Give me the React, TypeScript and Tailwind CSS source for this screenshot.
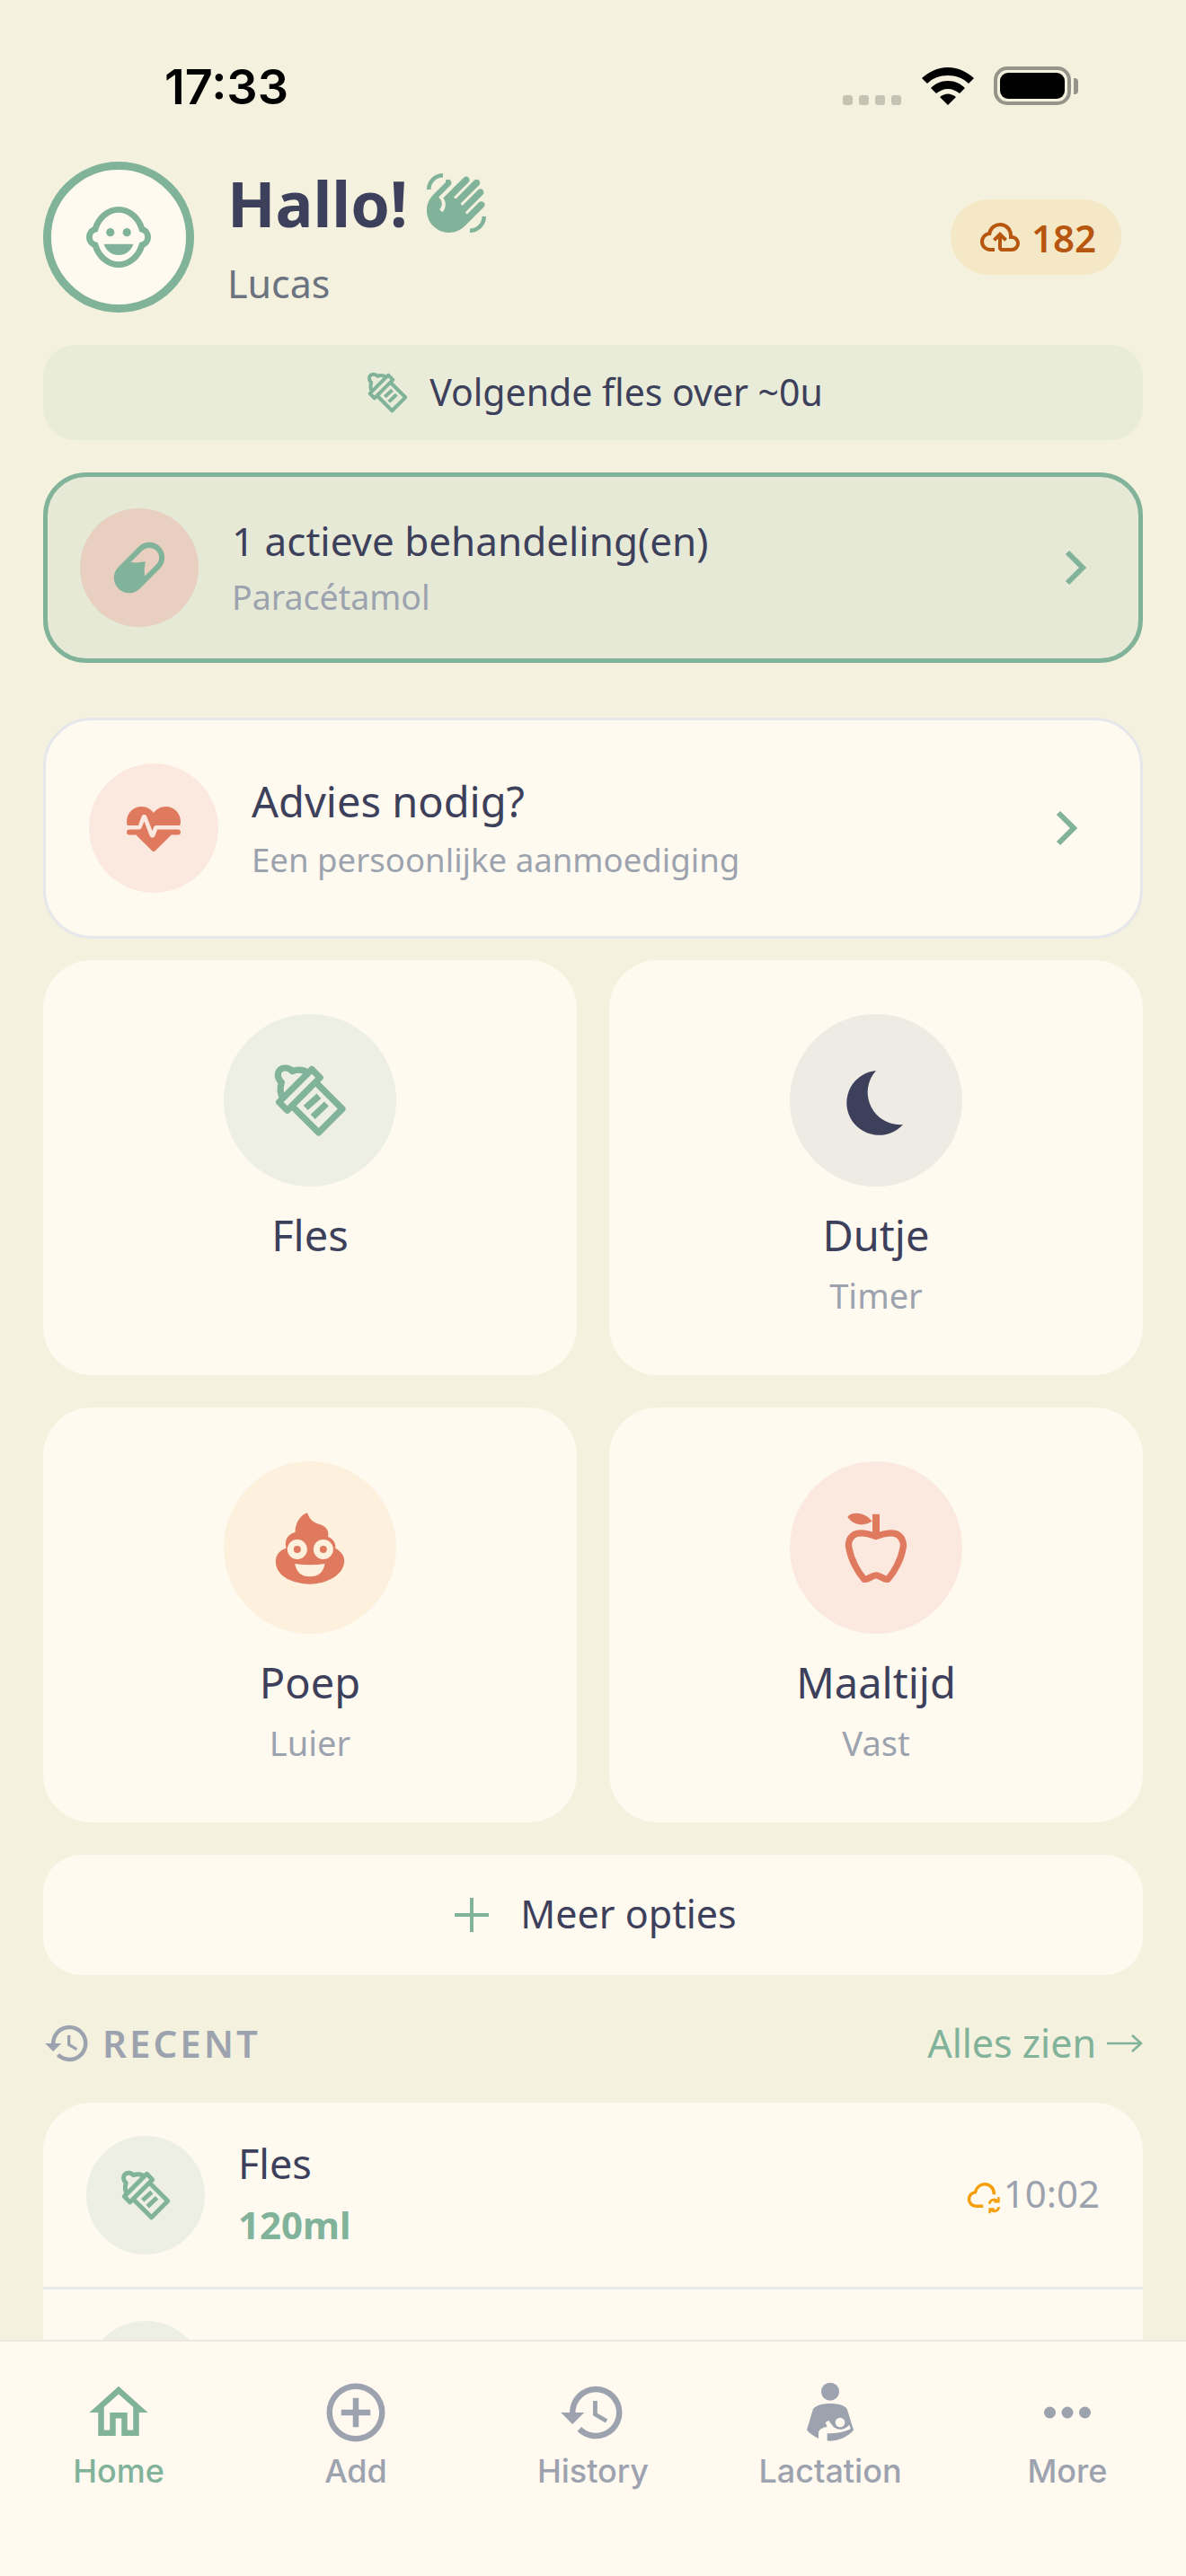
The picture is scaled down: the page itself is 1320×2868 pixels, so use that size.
import React from "react";

const Mdi = ({ d, size, className }: { d: string; size: number; className?: string }) => (
  <svg width={size} height={size} viewBox="0 0 24 24" fill="currentColor" className={className}>
    <path d={d} />
  </svg>
);

const HOME = "M12 5.69L17 10.19V18H15V12H9V18H7V10.19L12 5.69M12 3L2 12H5V20H11V14H13V20H19V12H22L12 3Z";
const PLUS_CIRCLE =
  "M12 20C7.59 20 4 16.41 4 12S7.59 4 12 4 20 7.59 20 12 16.41 20 12 20M12 2A10 10 0 0 0 2 12A10 10 0 0 0 12 22A10 10 0 0 0 22 12A10 10 0 0 0 12 2M13 7H11V11H7V13H11V17H13V13H17V11H13V7Z";
const HISTORY =
  "M13.5 8H12V13L16.28 15.54L17 14.33L13.5 12.25V8M13 3A9 9 0 0 0 4 12H1L4.96 16.03L9 12H6A7 7 0 0 1 13 5A7 7 0 0 1 20 12A7 7 0 0 1 13 19C11.07 19 9.32 18.21 8.06 16.94L6.64 18.36C8.27 20 10.5 21 13 21A9 9 0 0 0 22 12A9 9 0 0 0 13 3Z";
const HEART_PULSE =
  "M7.5 4A5.5 5.5 0 0 0 2 9.5C2 10 2.09 10.5 2.22 11H6.3L7.57 7.63C7.87 6.83 9.05 6.75 9.43 7.63L11.5 13L12.09 11.58C12.22 11.25 12.57 11 13 11H21.78C21.91 10.5 22 10 22 9.5A5.5 5.5 0 0 0 16.5 4C14.64 4 13 4.93 12 6.34C11 4.93 9.36 4 7.5 4M3 12.5A1 1 0 0 0 2 13.5A1 1 0 0 0 3 14.5H5.44L11 20C12 20.9 12 20.9 13 20L18.56 14.5H21A1 1 0 0 0 22 13.5A1 1 0 0 0 21 12.5H13.4L12.47 14.8C12.07 15.81 10.92 15.67 10.55 14.83L8.5 9.5L7.54 11.83C7.39 12.21 7.05 12.5 6.6 12.5H3Z";
const HAND_WAVE =
  "M23 17C23 20.31 20.31 23 17 23V21.5C19.5 21.5 21.5 19.5 21.5 17H23M1 7C1 3.69 3.69 1 7 1V2.5C4.5 2.5 2.5 4.5 2.5 7H1M8 4.32L3.41 8.92C0.19 12.14 0.19 17.37 3.41 20.59S11.86 23.81 15.08 20.59L22.15 13.5C22.64 13.03 22.64 12.24 22.15 11.75C21.66 11.26 20.87 11.26 20.38 11.75L15.96 16.17L15.25 15.46L21.79 8.92C22.28 8.43 22.28 7.64 21.79 7.15S20.5 6.66 20 7.15L14.19 13L13.5 12.27L20.37 5.38C20.87 4.89 20.87 4.1 20.37 3.61S19.09 3.12 18.6 3.61L11.71 10.5L11 9.8L16.5 4.32C17 3.83 17 3.04 16.5 2.55S15.22 2.06 14.73 2.55L7.11 10.17C8.33 11.74 8.22 14 6.78 15.45L5.72 14.39C6.89 13.22 6.89 11.32 5.72 10.15L5.37 9.8L9.78 5.39C10.27 4.9 10.27 4.11 9.78 3.62C9.28 3.13 8.5 3.13 8 3.62V4.32Z";
const CLOUD_UP =
  "M6.5 20Q4.22 20 2.61 18.43 1 16.85 1 14.58 1 12.63 2.17 11.1 3.35 9.57 5.25 9.15 5.88 6.85 7.75 5.43 9.63 4 12 4 14.93 4 16.96 6.04 19 8.07 19 11 20.73 11.2 21.86 12.5 23 13.78 23 15.5 23 17.38 21.69 18.69 20.38 20 18.5 20H13Q12.18 20 11.59 19.41 11 18.83 11 18V12.85L9.4 14.4L8 13L12 9L16 13L14.6 14.4L13 12.85V18H18.5Q19.55 18 20.27 17.27 21 16.55 21 15.5 21 14.45 20.27 13.73 19.55 13 18.5 13H17V11Q17 8.93 15.54 7.46 14.08 6 12 6 9.93 6 8.46 7.46 7 8.93 7 11H6.5Q5.05 11 4.03 12.03 3 13.05 3 14.5 3 15.95 4.03 17 5.05 18 6.5 18H9V20Z";

const Bottle = ({ size, className }: { size: number; className?: string }) => (
  <svg width={size} height={size} viewBox="0 0 24 24" fill="none" stroke="currentColor" strokeWidth="1.8" strokeLinejoin="round" className={className}>
    <path d="M13.8 7.2L21 14.4L14.4 21L7.2 13.8" />
    <path d="M12.5 3.4L14.8 5.7L5.7 14.8L3.4 12.5Z" />
    <path d="M11 4C9.6 3.4 8.3 3.4 7.1 3.9C6.1 2.7 4.4 2.8 3.6 3.6C2.8 4.5 2.9 6 4.1 7C3.6 8.5 3.7 10.2 4.5 11.5" />
    <path d="M10.8 14.1L14.5 10.8M12.8 16.6L16.6 13" />
  </svg>
);

const BabyFace = () => (
  <svg width="92" height="92" viewBox="0 0 24 24" className="text-[#81b29a]">
    <path
      d="M5.2 9.7C6.2 6.3 9 4 12 4C15 4 17.8 6.3 18.8 9.7A2.4 2.4 0 0 1 18.8 14.3C17.8 17.7 15 20 12 20C9 20 6.2 17.7 5.2 14.3A2.4 2.4 0 0 1 5.2 9.7Z"
      fill="none"
      stroke="currentColor"
      strokeWidth="1.8"
    />
    <circle cx="9.6" cy="10.6" r="1.2" fill="currentColor" />
    <circle cx="14.4" cy="10.6" r="1.2" fill="currentColor" />
    <path d="M7.7 14H16.3C15.6 16 14 17.2 12 17.2C10 17.2 8.4 16 7.7 14Z" fill="currentColor" />
  </svg>
);

const Pill = () => (
  <svg width="76" height="76" viewBox="0 0 24 24" className="text-[#81b29a]">
    <g transform="rotate(45 12 12)">
      <rect x="7.6" y="2.6" width="8.8" height="18.8" rx="4.4" fill="none" stroke="currentColor" strokeWidth="1.9" />
      <path d="M7.6 13.5L10 11.5L12 9L14 11.5L16.4 13.5V17A4.4 4.4 0 0 1 7.6 17Z" fill="currentColor" />
    </g>
  </svg>
);

const Moon = () => (
  <svg width="84" height="84" viewBox="0 0 84 84" className="text-[#3d405b]" fill="currentColor">
    <path d="M42 9A36 36 0 1 0 72 69A36 36 0 0 1 42 9Z" />
  </svg>
);

const Poop = () => (
  <svg width="82" height="85" viewBox="225 210 245 255">
    <path
      fill="#e07a5f"
      d="M338 220C345 235 350 250 378 258C400 264 412 278 408 300C425 308 435 322 432 338C452 348 464 365 462 385C458 430 400 458 347 458C295 458 235 435 233 385C232 362 245 345 268 338C262 315 270 292 298 285C298 255 315 228 338 220Z"
    />
    <circle cx="305" cy="342" r="33" fill="#fdf0dd" />
    <circle cx="392" cy="342" r="33" fill="#fdf0dd" />
    <circle cx="305" cy="342" r="12" fill="#e07a5f" />
    <circle cx="392" cy="342" r="12" fill="#e07a5f" />
    <path fill="#fdf0dd" d="M297 390Q347 398 397 390Q390 433 347 433Q305 433 297 390Z" />
  </svg>
);

const Apple = () => (
  <svg width="70" height="82" viewBox="240 220 210 245">
    <rect x="333" y="231" width="24" height="70" fill="#e07a5f" />
    <path fill="#e07a5f" d="M250 240C265 220 310 225 332 255C300 275 265 265 250 240Z" />
    <path
      fill="none"
      stroke="#e07a5f"
      strokeWidth="22"
      strokeLinejoin="round"
      d="M345 305C325 298 300 290 280 296C258 303 250 325 255 345C262 385 285 425 305 448C318 452 330 435 345 435C360 435 372 452 385 448C405 425 428 385 435 345C440 325 430 303 410 296C390 290 365 298 345 305Z"
    />
  </svg>
);

const Lactation = () => (
  <svg width="78" height="78" viewBox="255 25 234 234" className="text-[#9ca3af]">
    <circle cx="372" cy="72" r="30" fill="currentColor" />
    <path
      fill="currentColor"
      d="M372 112C345 112 325 118 315 130L294 200C310 222 345 237 372 237C400 237 435 222 450 200L428 130C420 118 400 112 372 112Z"
    />
    <circle cx="405" cy="175" r="16" fill="#fff9f0" />
    <path fill="#fff9f0" d="M333 240V212C333 198 345 192 362 190L356 176L366 168L383 190C395 200 415 205 436 183L440 196C420 208 385 212 362 212V240Z" />
  </svg>
);

const CloudSync = () => (
  <svg width="42" height="42" viewBox="0 0 24 24" fill="none" stroke="currentColor" strokeWidth="2" className="text-[#f59e0b]">
    <path d="M11 19H6.5C4 19 2 17 2 14.5C2 12.2 3.8 10.3 6 10.1C6.7 7.1 9 5 12 5C15.5 5 18 7.8 18 11.5" />
    <path d="M15 17.5A3 3 0 0 1 20 15.6" strokeWidth="1.6" />
    <path d="M21 19.5A3 3 0 0 1 16 21.4" strokeWidth="1.6" />
    <path d="M20.8 13.2V16.2H17.8" strokeWidth="1.4" />
    <path d="M15.2 23.6V20.8H18.2" strokeWidth="1.4" />
  </svg>
);

const StatusBar = () => (
  <div className="h-[180px] flex justify-between pt-[67px] pl-[183px] pr-[120px] -mx-[48px]">
    <span className="text-[54px] leading-[60px] font-semibold text-black font-['Inter',sans-serif]">17:33</span>
    <div className="flex items-end h-[58px] pb-[8px]">
      <div className="flex gap-[7px] mr-[23px]">
        <span className="w-[11px] h-[11px] rounded-[3px] bg-[#c5c3b3]" />
        <span className="w-[11px] h-[11px] rounded-[3px] bg-[#c5c3b3]" />
        <span className="w-[11px] h-[11px] rounded-[3px] bg-[#c5c3b3]" />
        <span className="w-[11px] h-[11px] rounded-[3px] bg-[#c5c3b3]" />
      </div>
      <svg width="58" height="42" viewBox="0 0 58 42" fill="#000" className="mr-[22px]">
        <path d="M29 0C17 0 8 5 0 12L6 18C12 12 20 9 29 9C38 9 46 12 52 18L58 12C50 5 41 0 29 0Z" />
        <path d="M10 23C15 18 21 15 29 15C37 15 43 18 48 23L42 29C38 26 34 24 29 24C24 24 20 26 16 29Z" />
        <path d="M20 33C23 31 26 29.5 29 29.5C32 29.5 35 31 38 33L29 42Z" />
      </svg>
      <div className="w-[86px] h-[43px] rounded-[15px] border-[4px] border-[#94948a] p-[3px]">
        <div className="w-full h-full rounded-[9px] bg-black" />
      </div>
      <span className="w-[5px] h-[18px] mb-[12px] ml-[3px] rounded-r-[4px] bg-[#94948a]" />
    </div>
  </div>
);

const ActionCard = ({ icon, circle, title, sub }: { icon: React.ReactNode; circle: string; title: string; sub?: string }) => (
  <div className="h-[462px] rounded-[54px] bg-[#fffaf0] flex flex-col items-center pt-[60px]">
    <div className={`w-[192px] h-[192px] rounded-full flex items-center justify-center ${circle}`}>{icon}</div>
    <div className="mt-[24px] text-[47px] leading-[60px] font-[450] text-[#3d405b]">{title}</div>
    {sub && <div className="mt-[10px] text-[38px] leading-[54px] text-[#9ca3af]">{sub}</div>}
  </div>
);

const Tab = ({ icon, label, active }: { icon: React.ReactNode; label: string; active?: boolean }) => (
  <div className={`w-[264px] flex flex-col items-center ${active ? "text-[#81b29a]" : "text-[#9ca3af]"}`}>
    <div className="h-[78px] flex items-center">{icon}</div>
    <span className="mt-[4px] text-[36px] leading-[44px] font-medium font-['Inter',sans-serif]">{label}</span>
  </div>
);

export default function App() {
  return (
    <div className="w-[1320px] h-[2868px] flex flex-col overflow-hidden bg-[#f4f1de] font-['Noto_Sans',sans-serif]">
      <div className="flex-1 min-h-0 overflow-hidden px-[48px]">
        <StatusBar />

        <div className="h-[168px] flex items-center">
          <div className="w-[168px] h-[168px] rounded-full border-[9px] border-[#81b29a] bg-[#fffaf0] flex items-center justify-center">
            <BabyFace />
          </div>
          <div className="ml-[37px] flex-1">
            <div className="flex items-center">
              <span className="text-[70px] leading-[84px] font-bold text-[#3d405b]">Hallo!</span>
              <Mdi d={HAND_WAVE} size={72} className="ml-[18px] text-[#81b29a]" />
            </div>
            <div className="mt-[20px] text-[43px] leading-[56px] text-[#6b7280]">Lucas</div>
          </div>
          <div className="mr-[24px] h-[84px] w-[190px] pl-[3px] rounded-full bg-[#f5e8c7] flex items-center justify-center text-[#b7560f]">
            <Mdi d={CLOUD_UP} size={48} />
            <span className="ml-[11px] text-[42px] font-semibold">182</span>
          </div>
        </div>

        <div className="mt-[36px] h-[106px] rounded-[36px] bg-[#e9ecd9] flex items-center justify-center">
          <Bottle size={54} className="text-[#81b29a]" />
          <span className="ml-[20px] text-[41px] leading-[56px] -mt-[3px] text-[#3d405b]">Volgende fles over ~0u</span>
        </div>

        <div className="mt-[36px] h-[212px] rounded-[48px] border-[5px] border-[#81b29a] bg-[#e6e9d6] flex items-center pl-[36px] pr-[56px]">
          <div className="w-[132px] h-[132px] rounded-full bg-[#e8cfc0] flex items-center justify-center">
            <Pill />
          </div>
          <div className="ml-[37px] flex-1">
            <div className="text-[44px] leading-[56px] font-[450] text-[#3d405b]">1 actieve behandeling(en)</div>
            <div className="mt-[9px] text-[37.5px] leading-[52px] text-[#9ca3af]">Paracétamol</div>
          </div>
          <svg width="28" height="40" viewBox="0 0 28 40" fill="none" stroke="#81b29a" strokeWidth="6">
            <path d="M5 3L22 20L5 37" />
          </svg>
        </div>

        <div className="mt-[61px] h-[246px] rounded-[54px] border-[3px] border-[#e5e7eb] bg-[#fffaf0] flex items-center pl-[48px] pr-[68px]">
          <div className="w-[144px] h-[144px] rounded-full bg-[#fbe9df] flex items-center justify-center">
            <Mdi d={HEART_PULSE} size={72} className="text-[#e07a5f]" />
          </div>
          <div className="ml-[37px] flex-1">
            <div className="text-[47px] leading-[60px] font-[450] text-[#3d405b]">Advies nodig?</div>
            <div className="mt-[9px] text-[36.6px] leading-[52px] text-[#9ca3af]">Een persoonlijke aanmoediging</div>
          </div>
          <svg width="28" height="40" viewBox="0 0 28 40" fill="none" stroke="#81b29a" strokeWidth="6">
            <path d="M5 3L22 20L5 37" />
          </svg>
        </div>

        <div className="mt-[24px] grid grid-cols-2 gap-x-[36px] gap-y-[36px]">
          <ActionCard icon={<Bottle size={96} className="text-[#81b29a]" />} circle="bg-[#edefe5]" title="Fles" />
          <ActionCard icon={<Moon />} circle="bg-[#eeebe4]" title="Dutje" sub="Timer" />
          <ActionCard icon={<Poop />} circle="bg-[#fdf0dd]" title="Poep" sub="Luier" />
          <ActionCard icon={<Apple />} circle="bg-[#fbe9df]" title="Maaltijd" sub="Vast" />
        </div>

        <div className="mt-[36px] h-[134px] pl-[6px] rounded-[42px] bg-[#fffaf0] flex items-center justify-center">
          <svg width="38" height="38" viewBox="0 0 38 38" fill="none" stroke="#81b29a" strokeWidth="4">
            <path d="M19 0V38M0 19H38" />
          </svg>
          <span className="ml-[35px] text-[43px] leading-[56px] -mt-[2px] font-[450] text-[#3d405b]">Meer opties</span>
        </div>

        <div className="mt-[49px] h-[54px] flex items-center justify-between">
          <div className="flex items-center text-[#9ca3af]">
            <Mdi d={HISTORY} size={54} />
            <span className="ml-[12px] text-[42px] leading-[54px] font-semibold tracking-[3px]">RECENT</span>
          </div>
          <div className="flex items-center text-[#81b29a]">
            <span className="text-[43px] leading-[54px]">Alles zien</span>
            <svg width="40" height="24" viewBox="0 0 40 24" fill="none" stroke="currentColor" strokeWidth="2.5" className="ml-[12px]">
              <path d="M0 12H38M28 3L38 12L28 21" />
            </svg>
          </div>
        </div>

        <div className="mt-[39px] rounded-t-[54px] bg-[#fffaf0]">
          <div className="h-[205px] flex items-center pl-[48px] pr-[48px]">
            <div className="w-[132px] h-[132px] rounded-full bg-[#edefe5] flex items-center justify-center">
              <Bottle size={66} className="text-[#81b29a]" />
            </div>
            <div className="ml-[37px] flex-1">
              <div className="text-[45px] leading-[60px] -mt-[2px] font-[450] text-[#3d405b]">Fles</div>
              <div className="mt-[8px] text-[42px] leading-[60px] font-bold text-[#81b29a]">120ml</div>
            </div>
            <CloudSync />
            <span className="text-[42px] leading-[56px] -mt-[3px] text-[#9ca3af]">10:02</span>
          </div>
          <div className="border-t-[3px] border-[#e5e7eb] h-[200px] pl-[48px] pt-[35px]">
            <div className="w-[132px] h-[132px] rounded-full bg-[#edefe5]" />
          </div>
        </div>
      </div>

      <div className="h-[263px] border-t-[2px] border-[#ebe9e2] bg-[#fff9f0] flex pt-[40px]">
        <Tab active icon={<Mdi d={HOME} size={78} />} label="Home" />
        <Tab icon={<Mdi d={PLUS_CIRCLE} size={78} />} label="Add" />
        <Tab icon={<Mdi d={HISTORY} size={78} />} label="History" />
        <Tab icon={<Lactation />} label="Lactation" />
        <Tab
          icon={
            <svg width="78" height="78" viewBox="0 0 78 78" fill="currentColor">
              <circle cx="19.5" cy="39" r="6.5" />
              <circle cx="39" cy="39" r="6.5" />
              <circle cx="58.5" cy="39" r="6.5" />
            </svg>
          }
          label="More"
        />
      </div>
    </div>
  );
}
